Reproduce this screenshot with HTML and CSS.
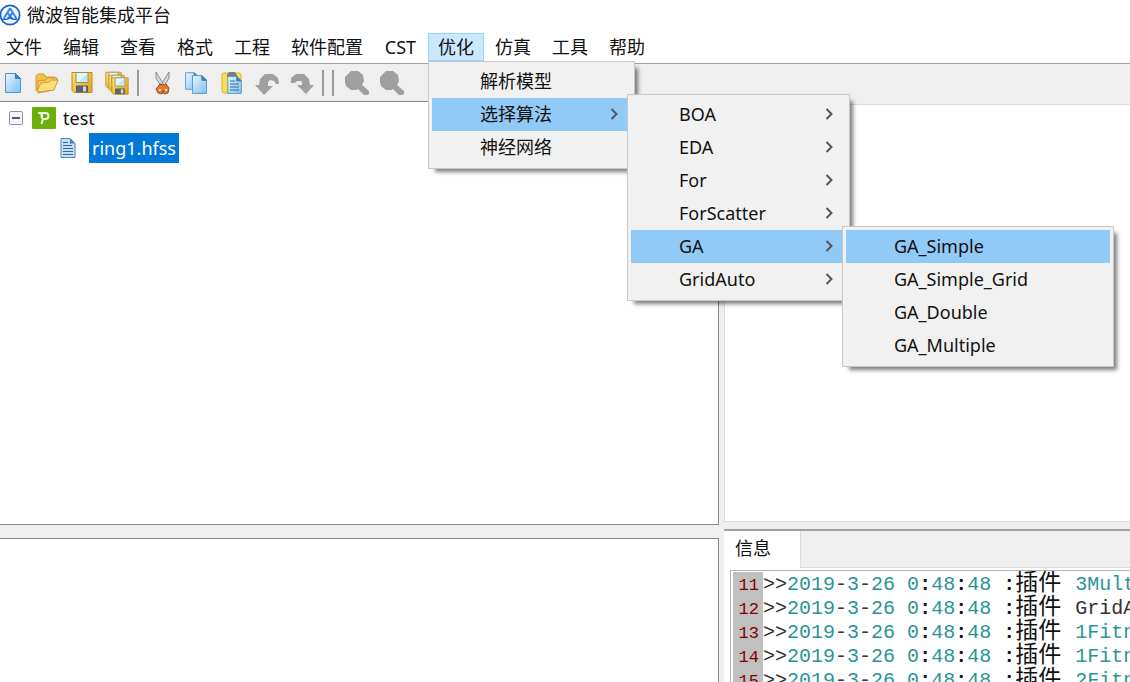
FILE: index.html
```html
<!DOCTYPE html>
<html lang="zh-CN">
<head>
<meta charset="utf-8">
<title>微波智能集成平台</title>
<link rel="stylesheet" href="styles.css">
</head>
<body>
<svg width="0" height="0" class="defs" aria-hidden="true">
  <defs>
    <linearGradient id="paper" x1="0" y1="0" x2="1" y2="1"><stop offset="0" stop-color="#e6f5ff"/><stop offset="1" stop-color="#7fc0f2"/></linearGradient>
    <linearGradient id="gold" x1="0" y1="0" x2="1" y2="1"><stop offset="0" stop-color="#ffe27a"/><stop offset="1" stop-color="#e0a018"/></linearGradient>
    <symbol id="floppy" viewBox="0 0 22 22">
      <path d="M1 1h20v20H3l-2-2z" fill="url(#gold)" stroke="#c08c1a"/>
      <path d="M5 1h12v10H5z" fill="#e3f6fb" stroke="#9b8c50"/>
      <path d="M16 2v8H8z" fill="#bfe6f3"/>
      <path d="M5 14h12v7H5z" fill="#5d6268"/>
      <path d="M12 15h3v5h-3z" fill="#d5d8da"/>
    </symbol>
    <symbol id="sheet" viewBox="0 0 16 20">
      <path d="M.5.5h10l5 5v14H.5z" fill="url(#paper)" stroke="#5a94c4"/>
      <path d="M10.500.5v5h5z" fill="#3f86c4" stroke="#3a7ab3"/>
    </symbol>
    <symbol id="lens" viewBox="0 0 24 24">
      <path d="M6 0h7l5 4 1 6-2 4 7 6v3l-2 1h-3l-6-6-2 1H6l-5-4-1-4V6z" fill="#9f9f9f"/>
    </symbol>
  </defs>
</svg>

<header class="titlebar">
  <svg class="logo" viewBox="0 0 24 24" aria-hidden="true">
    <circle cx="10.500" cy="12" r="10" fill="#f4f9ff" stroke="#1d66c9" stroke-width="1.800"/>
    <path d="M10.500 5L4 15.500M10.500 5L17 15.500M8 10l5 6M13 10l-5 6" fill="none" stroke="#2a83e6" stroke-width="2"/>
    <path d="M2.500 16.500h4.500l3.500-1.500 3.500 1.500h4.500" fill="none" stroke="#1d66c9" stroke-width="1.500"/>
  </svg>
  <h1 class="title">微波智能集成平台</h1>
</header>

<nav class="menubar">
  <button class="menu-button">文件</button>
  <button class="menu-button">编辑</button>
  <button class="menu-button">查看</button>
  <button class="menu-button">格式</button>
  <button class="menu-button">工程</button>
  <button class="menu-button">软件配置</button>
  <button class="menu-button">CST</button>
  <div class="menu-holder">
    <button class="menu-button open">优化</button>
    <ul class="menu menu-root">
      <li class="item"><button class="entry">解析模型</button></li>
      <li class="item">
        <button class="entry active">选择算法<svg class="arrow" viewBox="0 0 8 12"><path d="M1.500 1l5 5-5 5"/></svg></button>
        <ul class="menu submenu menu-algorithms">
          <li class="item"><button class="entry">BOA<svg class="arrow" viewBox="0 0 8 12"><path d="M1.500 1l5 5-5 5"/></svg></button></li>
          <li class="item"><button class="entry">EDA<svg class="arrow" viewBox="0 0 8 12"><path d="M1.500 1l5 5-5 5"/></svg></button></li>
          <li class="item"><button class="entry">For<svg class="arrow" viewBox="0 0 8 12"><path d="M1.500 1l5 5-5 5"/></svg></button></li>
          <li class="item"><button class="entry">ForScatter<svg class="arrow" viewBox="0 0 8 12"><path d="M1.500 1l5 5-5 5"/></svg></button></li>
          <li class="item">
            <button class="entry active">GA<svg class="arrow" viewBox="0 0 8 12"><path d="M1.500 1l5 5-5 5"/></svg></button>
            <ul class="menu submenu menu-genetic">
              <li class="item"><button class="entry active">GA_Simple</button></li>
              <li class="item"><button class="entry">GA_Simple_Grid</button></li>
              <li class="item"><button class="entry">GA_Double</button></li>
              <li class="item"><button class="entry">GA_Multiple</button></li>
            </ul>
          </li>
          <li class="item"><button class="entry">GridAuto<svg class="arrow" viewBox="0 0 8 12"><path d="M1.500 1l5 5-5 5"/></svg></button></li>
        </ul>
      </li>
      <li class="item"><button class="entry">神经网络</button></li>
    </ul>
  </div>
  <button class="menu-button">仿真</button>
  <button class="menu-button">工具</button>
  <button class="menu-button">帮助</button>
</nav>

<main class="workspace">
  <section class="left">
    <div class="toolbar">
      <button class="tool" aria-label="新建"><svg viewBox="0 0 24 24"><use href="#sheet" x="5" y="2" width="16" height="20"/></svg></button>
      <button class="tool" aria-label="打开"><svg viewBox="0 0 24 24">
        <path d="M1 20V5l2-2h6l2 3h9v5" fill="#f3c04a" stroke="#d09a2c"/>
        <path d="M3 10l8-1 2-2h9v4l-4 8-15 3z" fill="#f8cf60" stroke="#d09a2c"/>
        <path d="M2 20l4-8 8-1 2-2h7l-4 10-14 2z" fill="#ffdc7c" stroke="#d09a2c"/></svg></button>
      <button class="tool" aria-label="保存"><svg viewBox="0 0 24 24"><use href="#floppy" x="1" y="0" width="22" height="23"/></svg></button>
      <button class="tool" aria-label="全部保存"><svg viewBox="0 0 24 24"><use href="#floppy" x="0" y="0" width="17" height="18"/><use href="#floppy" x="3" y="3" width="17" height="18"/><use href="#floppy" x="6" y="6" width="18" height="18"/></svg></button>
      <span class="separator"></span>
      <button class="tool" aria-label="剪切"><svg viewBox="0 0 24 24">
        <path d="M6 1l8 13-3 1L6 7zM19 1l-8 13 3 1 5-8z" fill="#d9dcde" stroke="#878b8f"/>
        <path d="M10 13l3 1 3-1 3 4-1 5-4 1-1-4-1 4-4-1-2-4z" fill="#e27836" stroke="#a8481c"/>
        <path d="M9 18h2v2H9zM15 18h2v2h-2z" fill="#f5e4d8"/></svg></button>
      <button class="tool" aria-label="复制"><svg viewBox="0 0 24 24"><use href="#sheet" x="0" y="1" width="14" height="18"/><use href="#sheet" x="7" y="4" width="15" height="19"/></svg></button>
      <button class="tool" aria-label="粘贴"><svg viewBox="0 0 24 24">
        <rect x="2" y="2" width="19" height="20" rx="2" fill="#f8de50" stroke="#d9b428"/>
        <path d="M7 4l2-3h6l2 3v2H7z" fill="#72808c"/>
        <use href="#sheet" x="7" y="5" width="15" height="18"/>
        <path d="M10 10h5M10 13h9M10 16h9M10 19h9" stroke="#2d6ba3"/></svg></button>
      <button class="tool" aria-label="撤销"><svg viewBox="0 0 24 24"><path d="M0 14h4l1-6 5-5h8l5 4 1 6h-3l-2-3-4-1-2 2v4h5l-9 9z" fill="#9f9f9f"/></svg></button>
      <button class="tool" aria-label="重做"><svg viewBox="0 0 24 24"><path d="M24 14h-4l-1-6-5-5H6L1 7l0 5h4l2-2h4l1 1v3H7l9 9z" fill="#9f9f9f"/></svg></button>
      <span class="separator"></span>
      <span class="separator"></span>
      <button class="tool" aria-label="放大"><svg viewBox="0 0 24 24"><use href="#lens" width="24" height="24"/></svg></button>
      <button class="tool" aria-label="缩小"><svg viewBox="0 0 24 24"><use href="#lens" width="24" height="24"/></svg></button>
    </div>
    <div class="tree">
      <div class="node">
        <button class="toggle" aria-label="折叠"></button>
        <svg class="project" viewBox="0 0 24 22" aria-hidden="true">
          <rect width="24" height="22" rx="1" fill="#6cae0a"/>
          <path d="M6 6h7.500a3 3 0 0 1 0 6H11l-1.500 5" fill="none" stroke="#f2f8e8" stroke-width="2"/>
          <path d="M8 5l3 2v4l-2 1z" fill="#f2f8e8"/>
        </svg>
        <span>test</span>
      </div>
      <div class="node child">
        <svg class="file" viewBox="0 0 16 20" aria-hidden="true">
          <path d="M1 .5h9l5 5v14H1z" fill="#c4e0f5" stroke="#4f88b8"/>
          <path d="M10 .5v5h5z" fill="#3f78a8"/>
          <path d="M3 4.500h5M3 7.500h9M3 10.500h10M3 13.500h10M3 16.500h10" stroke="#35698f"/>
        </svg>
        <span class="selected">ring1.hfss</span>
      </div>
    </div>
    <div class="detail"></div>
  </section>

  <section class="right">
    <div class="strip"></div>
    <div class="canvas"></div>
    <div class="output">
      <div class="tabs"><button class="tab">信息</button></div>
      <div class="log">
        <div class="line"><span class="number">11</span><span class="code">&gt;&gt;<i>2019</i>-<i>3</i>-<i>26</i> <i>0</i><b>:</b><i>48</i><b>:</b><i>48</i> <b>:</b><span class="han">插件</span> <i>3Mult</i></span></div>
        <div class="line"><span class="number">12</span><span class="code">&gt;&gt;<i>2019</i>-<i>3</i>-<i>26</i> <i>0</i><b>:</b><i>48</i><b>:</b><i>48</i> <b>:</b><span class="han">插件</span> GridA</span></div>
        <div class="line"><span class="number">13</span><span class="code">&gt;&gt;<i>2019</i>-<i>3</i>-<i>26</i> <i>0</i><b>:</b><i>48</i><b>:</b><i>48</i> <b>:</b><span class="han">插件</span> <i>1Fitn</i></span></div>
        <div class="line"><span class="number">14</span><span class="code">&gt;&gt;<i>2019</i>-<i>3</i>-<i>26</i> <i>0</i><b>:</b><i>48</i><b>:</b><i>48</i> <b>:</b><span class="han">插件</span> <i>1Fitn</i></span></div>
        <div class="line"><span class="number">15</span><span class="code">&gt;&gt;<i>2019</i>-<i>3</i>-<i>26</i> <i>0</i><b>:</b><i>48</i><b>:</b><i>48</i> <b>:</b><span class="han">插件</span> <i>2Fitn</i></span></div>
      </div>
    </div>
  </section>
</main>
</body>
</html>
```
FILE: styles.css
```css
* { box-sizing: border-box; }

body {
  margin: 0;
  height: 100vh;
  display: flex;
  flex-direction: column;
  overflow: hidden;
  background: #fff;
  color: #111;
  font-family: "Noto Sans", "Noto Sans CJK SC", sans-serif;
  font-size: 18px;
  line-height: 24px;
}

button {
  margin: 0;
  padding: 0;
  border: 0;
  background: none;
  color: inherit;
  font: inherit;
}

.defs { position: absolute; }

/* Title and menu bar */
.titlebar {
  height: 33px;
  display: flex;
  align-items: center;
  gap: 4px;
  padding-bottom: 3px;
}
.logo { width: 23px; height: 24px; }
.title { margin: 0; font-size: 18px; font-weight: 400; }

.menubar {
  height: 30px;
  display: flex;
  gap: 1px;
  margin-left: -4px;
}
.menu-button {
  height: 28px;
  min-width: 53px;
  padding: 0 9px;
  border: 1px solid transparent;
  line-height: 26px;
}
.menu-button.open { background: #cce8ff; border-color: #99d1ff; }
.menu-holder { position: relative; }

.menu {
  position: absolute;
  z-index: 2;
  margin: 0;
  padding: 3px 3px 4px;
  list-style: none;
  background: #f1f1f1;
  border: 1px solid #c8c8c8;
  box-shadow: 5px 5px 4px -2px rgba(0, 0, 0, .5);
}
.menu-root { top: 28px; left: 0; width: 207px; }
.submenu { top: -4px; left: calc(100% - 4px); }
.menu-algorithms { width: 223px; }
.menu-genetic { width: 272px; }
.item { position: relative; }
.entry {
  display: flex;
  align-items: center;
  justify-content: space-between;
  width: 100%;
  height: 33px;
  padding: 0 13px 2px 48px;
  text-align: left;
}
.entry.active { background: #91c9f7; }
.arrow {
  width: 8px;
  height: 12px;
  fill: none;
  stroke: #555;
  stroke-width: 2;
}

/* Workspace */
.workspace {
  flex: 1;
  min-height: 0;
  display: grid;
  grid-template-columns: 719fr 406fr;
  gap: 5px;
  background: #efefef;
  border-top: 1px solid #a0a0a0;
}
.left, .right {
  min-width: 0;
  min-height: 0;
  display: flex;
  flex-direction: column;
}

.toolbar {
  height: 37px;
  display: flex;
  align-items: center;
  gap: 11px;
}
.tool { width: 24px; height: 24px; }
.tool svg { display: block; width: 24px; height: 24px; }
.separator {
  width: 2px;
  height: 26px;
  margin-left: -3px;
  background: #999;
}

.tree, .detail {
  background: #fff;
  border: 1px solid #828790;
  border-left: 0;
  min-height: 0;
}
.tree { flex: 47; padding-top: 1px; }
.detail { flex: 16; margin-top: 13px; border-bottom: 0; }

.node {
  height: 30px;
  display: flex;
  align-items: center;
  gap: 7px;
  padding-left: 9px;
}
.node.child { gap: 13px; padding-left: 60px; }
.toggle {
  width: 14px;
  height: 14px;
  margin-right: 2px;
  border: 1px solid #919191;
  border-radius: 2px;
  background: linear-gradient(#3c5a9c, #3c5a9c) center / 8px 2px no-repeat #f6f6f6;
}
.project { width: 24px; height: 22px; }
.file { width: 16px; height: 20px; }
.selected {
  padding: 0 3px;
  background: #0078d7;
  color: #fff;
  line-height: 30px;
}

.strip { height: 40px; }
.canvas {
  flex: 11;
  background: #fff;
  border: 1px solid #dcdcdc;
  border-right: 0;
}
.output {
  flex: 4;
  min-height: 0;
  margin-top: 7px;
  display: flex;
  flex-direction: column;
  border-top: 2px solid #a0a0a0;
  background: #fff;
}
.tabs {
  height: 37px;
  flex-shrink: 0;
  display: flex;
  background: #efefef;
  border-bottom: 1px solid #dcdcdc;
}
.tab {
  height: 37px;
  padding: 0 29px 2px 11px;
  background: #fff;
  border-right: 1px solid #dcdcdc;
}
.log {
  flex: 1;
  min-height: 0;
  margin: 2px 0 0 6px;
  padding: 1px 0 0 2px;
  overflow: hidden;
  border: solid #b4b4b8;
  border-width: 1px 0 0 1px;
  font-family: "Liberation Mono", "Noto Sans CJK SC", monospace;
}
.line { display: flex; height: 24px; }
.number {
  flex-shrink: 0;
  width: 30px;
  padding: 2px 4px 0 0;
  background: #c0c0c0;
  color: #800000;
  font-size: 17px;
  text-align: right;
}
.code {
  color: #333;
  font-size: 20px;
  line-height: 26px;
  white-space: pre;
}
.code i { color: #2b9494; font-style: normal; }
.code b { color: #201020; }
.han {
  display: inline-block;
  width: 48px;
  color: #111;
  font-size: 23px;
  line-height: 24px;
}
```
